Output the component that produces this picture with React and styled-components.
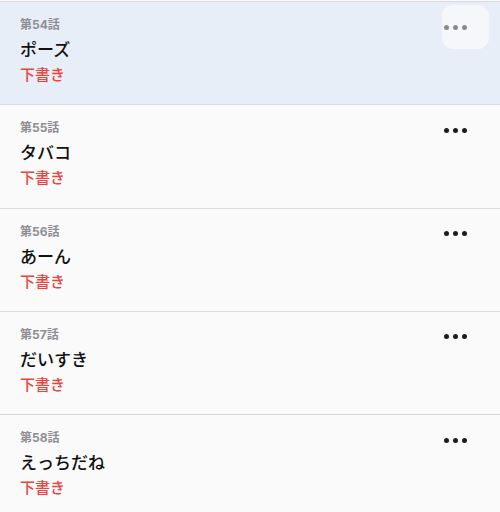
import styled, { createGlobalStyle } from 'styled-components'

const Global = createGlobalStyle`
  html, body {
    margin: 0;
    padding: 0;
    background: #fafafa;
  }
  body {
    font-family: 'Inter', 'Noto Sans CJK JP', sans-serif;
  }
`

const List = styled.ul`
  list-style: none;
  margin: 0;
  padding: 1px 0 0;
  width: 500px;
`

const Row = styled.li`
  box-sizing: border-box;
  height: 103.25px;
  display: flex;
  align-items: flex-start;
  justify-content: space-between;
  padding: 3px 11px 0 20px;
  border-top: 1px solid #d9d9dc;
  background: ${p => (p.$active ? '#e8eef8' : '#fafafa')};
`

const Info = styled.div`
  display: flex;
  flex-direction: column;
  padding-top: 11px;
`

const Episode = styled.div`
  font-size: 12px;
  line-height: 18px;
  font-weight: 700;
  color: #8e8e93;
`

const Title = styled.div`
  font-family: 'Noto Sans CJK JP', sans-serif;
  font-size: 17px;
  line-height: 29px;
  font-weight: 500;
  color: #111;
`

const Status = styled.div`
  font-family: 'Noto Sans CJK JP', sans-serif;
  font-size: 15px;
  line-height: 22px;
  font-weight: 500;
  color: #e8453c;
`

const MoreButton = styled.button`
  box-sizing: border-box;
  width: 47px;
  height: 44px;
  margin-top: 0;
  border: none;
  border-radius: 11px;
  padding: 0 0 0 2px;
  display: flex;
  align-items: center;
  justify-content: flex-start;
  gap: 4px;
  background: ${p => (p.$active ? '#f5f7fb' : 'transparent')};
  cursor: pointer;
`

const Dot = styled.span`
  width: 5px;
  height: 5px;
  border-radius: 50%;
  background: ${p => (p.$active ? '#8a8a8e' : '#1c1c1e')};
`

const episodes = [
  { no: 54, title: 'ポーズ', active: true },
  { no: 55, title: 'タバコ' },
  { no: 56, title: 'あーん' },
  { no: 57, title: 'だいすき' },
  { no: 58, title: 'えっちだね' },
]

export default function App() {
  return (
    <>
      <Global />
      <List>
        {episodes.map(ep => (
          <Row key={ep.no} $active={ep.active}>
            <Info>
              <Episode>第{ep.no}話</Episode>
              <Title>{ep.title}</Title>
              <Status>下書き</Status>
            </Info>
            <MoreButton $active={ep.active} aria-label="その他">
              <Dot $active={ep.active} />
              <Dot $active={ep.active} />
              <Dot $active={ep.active} />
            </MoreButton>
          </Row>
        ))}
      </List>
    </>
  )
}
